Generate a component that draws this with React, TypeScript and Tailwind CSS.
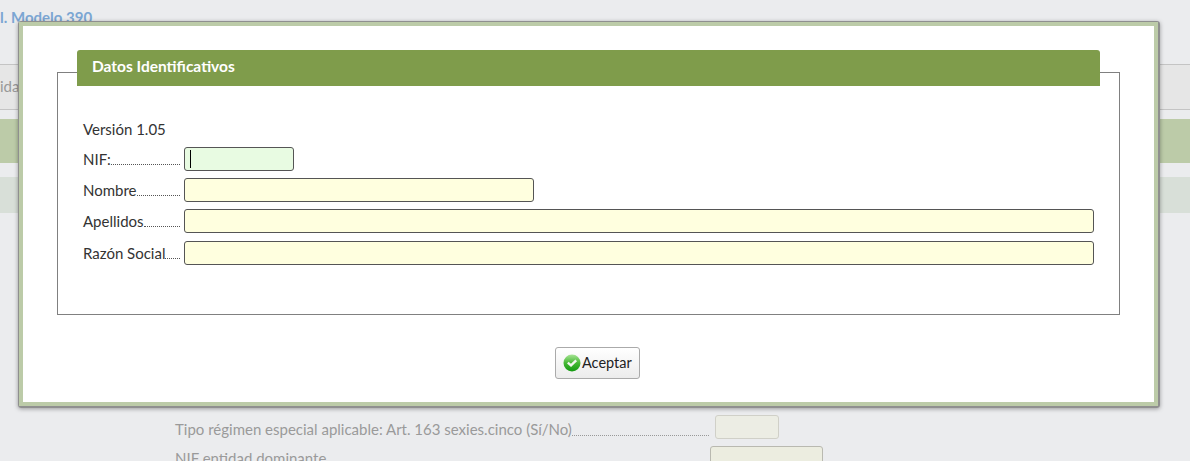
const rows = [
  { label: 'NIF:', width: 'w-[110px]', bg: 'bg-[#e8fbe2]', focused: true, mt: 'mt-0' },
  { label: 'Nombre', width: 'w-[350px]', bg: 'bg-[#ffffdf]', mt: 'mt-[7px]' },
  { label: 'Apellidos', width: 'flex-1', bg: 'bg-[#ffffdf]', mt: 'mt-[7px]' },
  { label: 'Razón Social', width: 'flex-1', bg: 'bg-[#ffffdf]', mt: 'mt-[8px]' },
]

function CheckIcon() {
  return (
    <svg width="18" height="18" viewBox="0 0 18 18" className="shrink-0">
      <defs>
        <linearGradient id="ok" x1="0" y1="0" x2="0" y2="1">
          <stop offset="0" stopColor="#a8e496" />
          <stop offset="0.5" stopColor="#45b834" />
          <stop offset="1" stopColor="#129a10" />
        </linearGradient>
      </defs>
      <circle cx="9" cy="9" r="8.5" fill="url(#ok)" />
      <path d="M4.8 8.6 L8 11.4 L13.2 6.4" fill="none" stroke="#f2f7ee" strokeWidth="2.4" />
    </svg>
  )
}

export default function App() {
  return (
    <div className="relative h-[461px] w-[1190px] overflow-hidden bg-[#ebecee] font-['Lato','Noto_Sans',sans-serif] text-[15px]">
      {/* page behind the dialog */}
      <div>
        <h1 className="h-[64px] pt-[8px] text-[15px] font-bold leading-[18px] text-[#7ba6d3]">l. Modelo 390</h1>
        <div className="h-[46px] border-y border-[#c4c4c4] bg-[#e6e6e6] leading-[42px] text-[#999]">ida</div>
        <div className="mt-[9px] h-[44px] bg-[#bccba8]" />
        <div className="mt-[14px] h-[36px] bg-[#d8dfd8]" />
        <div className="mt-[202px] flex items-end pl-[175px]">
          <span className="-translate-y-px whitespace-nowrap leading-[18px] text-[#9a9a9a]">Tipo régimen especial aplicable: Art. 163 sexies.cinco (Sí/No)</span>
          <span className="mb-[3px] flex-1 border-b border-dotted border-[#999]" />
          <span className="ml-[6px] mr-[411px] h-[24px] w-[64px] rounded-[3px] border border-[#d0d0c8] bg-[#ecede4]" />
        </div>
      </div>
      <div className="absolute left-[175px] top-[446px] flex w-[648px] justify-between">
        <span className="leading-[24px] text-[#9a9a9a]">NIF entidad dominante</span>
        <span className="h-[30px] w-[113px] rounded-[3px] border border-[#b9b9b0] bg-[#ecede0]" />
      </div>

      {/* dialog */}
      <div className="absolute left-[18px] top-[21px] h-[387px] w-[1142px] rounded-[3px] border-t border-l border-r-2 border-b-2 border-[#8f8f8f] shadow-[0_1px_4px_rgba(0,0,0,0.35)]">
        <div className="h-full border-[4px] border-[#bccba8] bg-white">
          <div className="relative mx-[34px] mt-[46px] h-[243px] border border-[#808080] pl-[25px] pr-[26px] pt-[47px] text-[#333]">
            <div className="absolute -top-[23px] left-[19px] right-[19px] h-[36px] rounded-t-[3px] bg-[#7f9c4b] pl-[15px] text-[15.5px] font-bold leading-[33px] text-white">
              Datos Identificativos
            </div>
            <p className="h-[18px] leading-[18px]">Versión 1.05</p>
            <div className="mt-[9px]">
              {rows.map(row => (
                <div key={row.label} className={`flex h-[24px] items-center ${row.mt}`}>
                  <span className="flex w-[101px] items-end self-end pb-[3px] pr-[4px]">
                    <span className="whitespace-nowrap leading-[18px]">{row.label}</span>
                    <span className="mb-[3px] flex-1 border-b border-dotted border-[#555]" />
                  </span>
                  <div className={`mr-[-1px] h-[24px] ${row.width} rounded-[3px] border border-[#555] ${row.bg}`}>
                    {row.focused && <span className="ml-[5px] mt-[2px] block h-[18px] w-px bg-black" />}
                  </div>
                </div>
              ))}
            </div>
          </div>
          <div className="mt-[32px] flex justify-center pl-[18px]">
            <button className="flex h-[32px] w-[85px] items-center gap-px rounded-[3px] border border-[#aaa] bg-gradient-to-b from-white to-[#ececec] pl-[7px] text-[14.5px] text-[#222]">
              <CheckIcon />
              Aceptar
            </button>
          </div>
        </div>
      </div>
    </div>
  )
}
